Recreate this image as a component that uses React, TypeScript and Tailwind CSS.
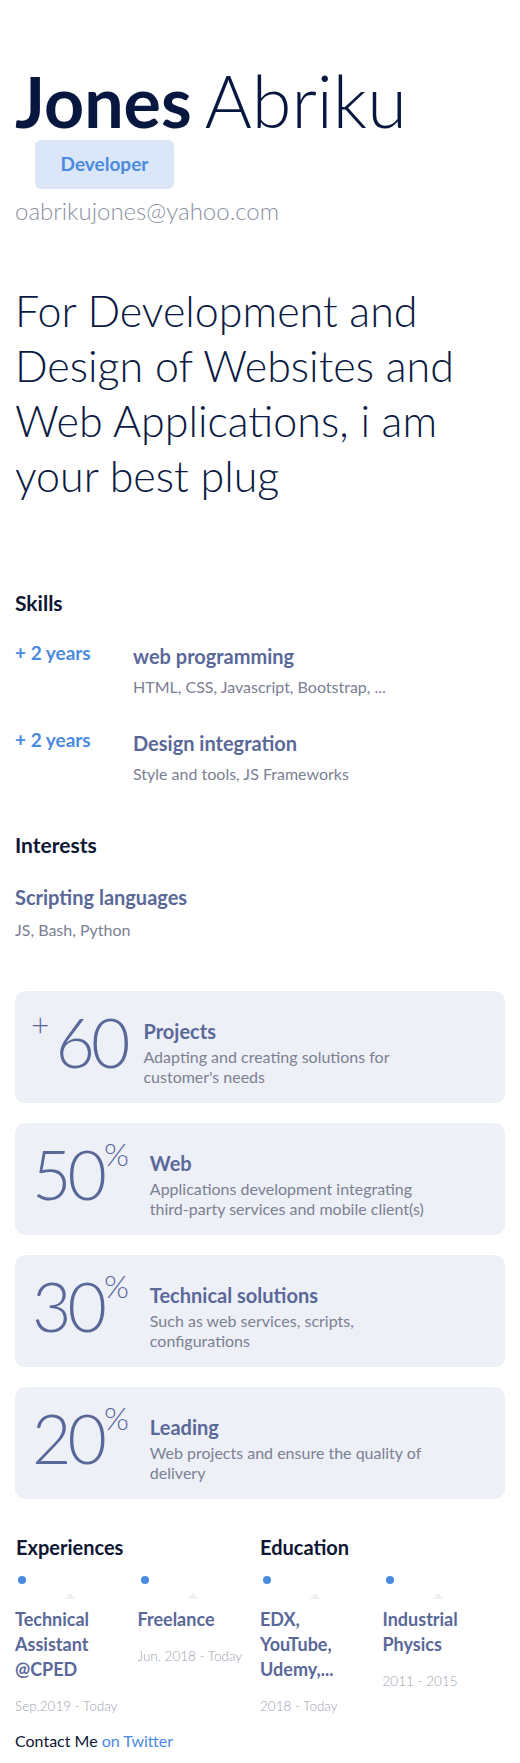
const skills = [
  { years: '+ 2 years', title: 'web programming', desc: 'HTML, CSS, Javascript, Bootstrap, ...' },
  { years: '+ 2 years', title: 'Design integration', desc: 'Style and tools, JS Frameworks' },
]

const stats = [
  { value: '50', title: 'Web', desc: 'Applications development integrating third-party services and mobile client(s)' },
  { value: '30', title: 'Technical solutions', desc: 'Such as web services, scripts, configurations' },
  { value: '20', title: 'Leading', desc: 'Web projects and ensure the quality of delivery' },
]

const experiences = [
  { title: 'Technical Assistant @CPED', date: 'Sep.2019 - Today' },
  { title: 'Freelance', date: 'Jun. 2018 - Today' },
]

const education = [
  { title: 'EDX, YouTube, Udemy,...', date: '2018 - Today' },
  { title: 'Industrial Physics', date: '2011 - 2015' },
]

function TimelineItem({ title, date }: { title: string; date: string }) {
  return (
    <div className="flex flex-col pr-2">
      <span className="ml-[3px] mt-[15px] block h-2 w-2 rounded-full bg-[#4a8ae0]" />
      <div className="relative mt-[9px] h-[6px]">
        <span className="absolute left-[50px] top-0 h-0 w-0 border-x-[5px] border-b-[6px] border-x-transparent border-b-[#eef0f4]" />
      </div>
      <h4 className="mt-[8px] text-[18px] font-bold leading-[25px] text-[#5a6899]">{title}</h4>
      <p className="mt-[14px] text-[13.5px] font-light leading-5 text-[#9ea3b1]">{date}</p>
    </div>
  )
}

export default function App() {
  return (
    <div className="min-h-screen bg-white px-[15px] pb-[11px] pt-16 font-['Lato','Liberation_Sans',sans-serif]">
      {/* Header */}
      <h1 className="text-[72px] leading-none text-[#07173f]">
        <span className="text-[70px] font-bold">Jones</span>
        <span className="ml-[13px] font-light">Abriku</span>
      </h1>
      <div className="ml-5 mt-1 flex h-[49px] w-[139px] items-center justify-center rounded-md bg-[#dbe7f8] text-[19px] font-bold text-[#4a8ae0]">
        Developer
      </div>
      <p className="mt-2 text-[24px] font-light leading-7 text-[#8b91a3]">oabrikujones@yahoo.com</p>

      <p className="mt-[58px] text-[43px] font-light leading-[55px] text-[#0b1a42]">
        For Development and Design of Websites and Web Applications, i am your best plug
      </p>

      {/* Skills */}
      <h2 className="mt-[86px] text-[21px] font-bold leading-7 text-[#0d1633]">Skills</h2>
      <div className="mt-[25px] flex flex-col gap-8">
        {skills.map((s) => (
          <div key={s.title} className="flex items-start">
            <span className="w-[118px] shrink-0 text-[19px] font-bold leading-[22px] text-[#4a8ae0]">{s.years}</span>
            <div>
              <h3 className="text-[20px] font-bold leading-7 text-[#5a6899]">{s.title}</h3>
              <p className="mt-[7px] text-[16px] leading-5 text-[#7b8093]">{s.desc}</p>
            </div>
          </div>
        ))}
      </div>

      {/* Interests */}
      <h2 className="mt-[47px] text-[21px] font-bold leading-7 text-[#0d1633]">Interests</h2>
      <h3 className="mt-6 text-[20px] font-bold leading-7 text-[#5a6899]">Scripting languages</h3>
      <p className="mt-[9px] text-[16px] leading-5 text-[#7b8093]">JS, Bash, Python</p>

      {/* Stats */}
      <div className="mt-[51px] flex flex-col gap-5">
        <div className="flex h-[112px] items-start gap-[17px] rounded-[10px] bg-[#edf0f7] pl-4">
          <div className="flex items-start pt-[17px] text-[#5a6899]">
            <span className="text-[32px] font-light leading-none">+</span>
            <span className="ml-[6px] text-[68px] font-light leading-none tracking-[-4px]">60</span>
          </div>
          <div className="max-w-[285px] pt-[26px]">
            <h3 className="text-[20px] font-bold leading-7 text-[#5a6899]">Projects</h3>
            <p className="mt-[2px] text-[16px] leading-5 text-[#7b8093]">Adapting and creating solutions for customer's needs</p>
          </div>
        </div>
        {stats.map((s) => (
          <div key={s.title} className="flex h-[112px] items-start gap-[21px] rounded-[10px] bg-[#edf0f7] pl-[17px]">
            <div className="flex items-start pt-[17px] text-[#5a6899]">
              <span className="text-[68px] font-light leading-none tracking-[-4px]">{s.value}</span>
              <span className="ml-[1px] -mt-[2px] text-[32px] font-light leading-none">%</span>
            </div>
            <div className="max-w-[285px] pt-[26px]">
              <h3 className="text-[20px] font-bold leading-7 text-[#5a6899]">{s.title}</h3>
              <p className="mt-[2px] text-[16px] leading-5 text-[#7b8093]">{s.desc}</p>
            </div>
          </div>
        ))}
      </div>

      {/* Experiences & Education */}
      <div className="mt-[34px] grid grid-cols-2">
        <div>
          <h2 className="ml-[1px] text-[20px] font-bold leading-7 text-[#0d1633]">Experiences</h2>
          <div className="grid grid-cols-2">
            {experiences.map((e) => (
              <TimelineItem key={e.title} {...e} />
            ))}
          </div>
        </div>
        <div>
          <h2 className="text-[20px] font-bold leading-7 text-[#0d1633]">Education</h2>
          <div className="grid grid-cols-2">
            {education.map((e) => (
              <TimelineItem key={e.title} {...e} />
            ))}
          </div>
        </div>
      </div>

      <p className="mt-[13px] text-[16px] leading-6 text-[#0d1633]">
        Contact Me <a className="text-[#4a8ae0]" href="#">on Twitter</a>
      </p>
    </div>
  )
}
